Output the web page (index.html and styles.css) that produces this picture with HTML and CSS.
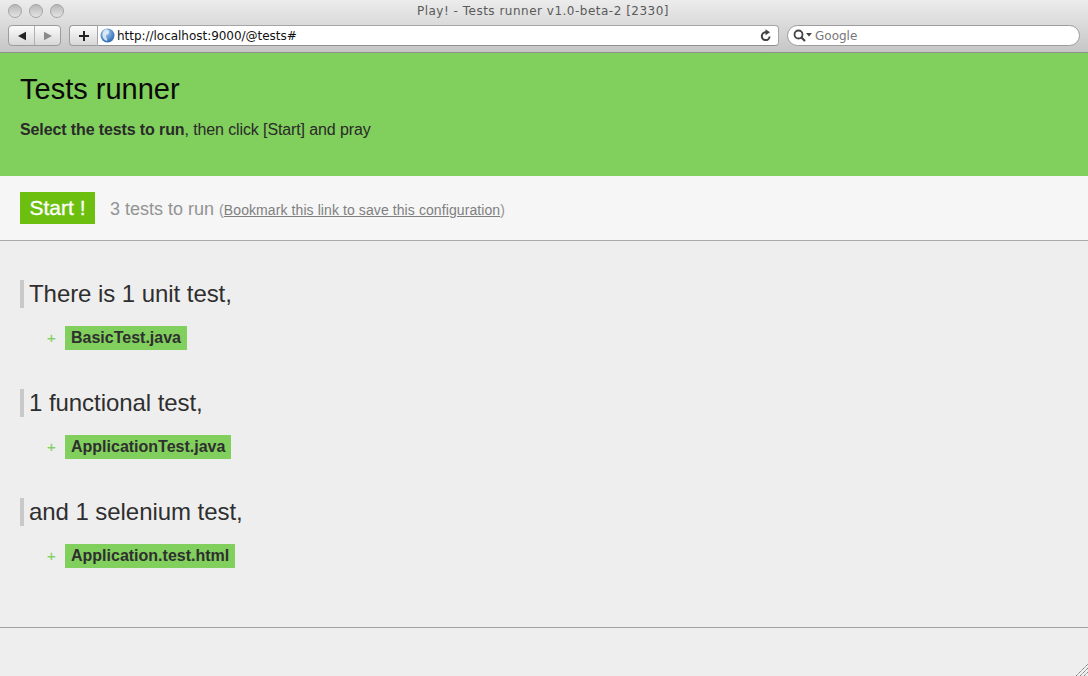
FILE: index.html
```html
<!DOCTYPE html>
<html lang="en">
<head>
<meta charset="utf-8">
<title>Play! - Tests runner v1.0-beta-2 [2330]</title>
<link rel="stylesheet" href="styles.css">
</head>
<body>
<div class="chrome">
  <div class="titlebar">
    <div class="lights"><span class="light"></span><span class="light"></span><span class="light"></span></div>
    <div class="wintitle">Play! - Tests runner v1.0-beta-2 [2330]</div>
  </div>
  <div class="toolbar">
    <div class="navbtns">
      <span class="navbtn"><svg width="10" height="10" viewBox="0 0 10 10"><path d="M1 5L9 .8V9.2Z" fill="#222"/></svg></span>
      <span class="navbtn"><svg width="10" height="10" viewBox="0 0 10 10"><path d="M9 5L1 .8V9.2Z" fill="#8a8a8a"/></svg></span>
    </div>
    <div class="address">
      <span class="addbtn"><svg width="12" height="12" viewBox="0 0 12 12"><path d="M6 1V11M1 6H11" stroke="#222" stroke-width="2"/></svg></span>
      <div class="urlfield">
        <svg class="globe" width="15" height="15" viewBox="0 0 15 15"><defs><radialGradient id="g" cx=".4" cy=".3" r=".8"><stop offset="0" stop-color="#a9cdf2"/><stop offset="1" stop-color="#1d5fae"/></radialGradient></defs><circle cx="7.5" cy="7.5" r="7" fill="url(#g)"/><path d="M5 1.5C8 1 10 3 9 5S6 6 6 8 8 10 7 13C4 12 2 9 2.5 6S4 3 5 1.5Z" fill="#e8eef5" opacity=".85"/></svg>
        <span class="url">http://localhost:9000/@tests#</span>
        <svg class="reload" width="12" height="13" viewBox="0 0 12 13"><path d="M9.6 7.5A3.9 3.9 0 1 1 6 3.3" fill="none" stroke="#444" stroke-width="2"/><path d="M5.5 .3L10 3.3 5.5 6.3Z" fill="#444"/></svg>
      </div>
    </div>
    <div class="search">
      <svg class="lens" width="19" height="13" viewBox="0 0 19 13"><circle cx="5.5" cy="5.5" r="4" fill="none" stroke="#444" stroke-width="1.8"/><path d="M8.5 8.5L12 12" stroke="#444" stroke-width="2.2"/><path d="M13 4H19L16 7.5Z" fill="#444"/></svg>
      <span class="placeholder">Google</span>
    </div>
  </div>
</div>

<header class="hero">
  <h1>Tests runner</h1>
  <p><strong>Select the tests to run</strong>, then click [Start] and pray</p>
</header>

<div class="startbar">
  <button class="start">Start !</button>
  <span class="count">3 tests to run</span>
  <span class="bookmark">(<a href="#">Bookmark this link to save this configuration</a>)</span>
</div>

<main class="tests">
  <section class="group">
    <h2>There is 1 unit test,</h2>
    <ul><li><span class="plus">+</span><span class="file">BasicTest.java</span></li></ul>
  </section>
  <section class="group">
    <h2>1 functional test,</h2>
    <ul><li><span class="plus">+</span><span class="file">ApplicationTest.java</span></li></ul>
  </section>
  <section class="group">
    <h2>and 1 selenium test,</h2>
    <ul><li><span class="plus">+</span><span class="file">Application.test.html</span></li></ul>
  </section>
</main>

<footer class="foot"></footer>
<svg class="grip" width="12" height="12" viewBox="0 0 12 12"><path d="M0 12L12 0M4 12L12 4M8 12L12 8" stroke="#777" stroke-width="1" stroke-dasharray="1.4 .6"/></svg>
</body>
</html>
```
FILE: styles.css
```css
* { box-sizing: border-box; }
html, body { margin: 0; height: 100%; }
body {
  height: 676px;
  overflow: hidden;
  position: relative;
  background: #eee;
  color: #2f2f2f;
  font-family: "Liberation Sans", Arial, sans-serif;
}

/* Browser chrome */
.chrome {
  height: 53px;
  background: linear-gradient(#ececec, #d9d9d9 50%, #c6c6c6);
  border-bottom: 1px solid #8f8f8f;
  font-family: "DejaVu Sans", sans-serif;
}
.titlebar {
  height: 25px;
  position: relative;
  display: flex;
  align-items: center;
  padding: 0 0 3px 8px;
}
.lights { display: flex; gap: 7px; }
.light {
  width: 14px;
  height: 14px;
  border-radius: 50%;
  background: linear-gradient(#b8b8b8, #e4e4e4);
  border: 1px solid #a4a4a4;
}
.wintitle {
  position: absolute;
  left: 0;
  right: 2px;
  top: 4px;
  text-align: center;
  font-size: 12px;
  line-height: 15px;
  letter-spacing: .5px;
  color: #5a5a5a;
}
.toolbar {
  display: flex;
  align-items: flex-start;
  padding-left: 8px;
}
.navbtns {
  width: 53px;
  height: 21px;
  display: flex;
  border: 1px solid #9c9c9c;
  border-radius: 4px;
  background: linear-gradient(#fbfbfb, #d8d8d8);
  margin-right: 8px;
}
.navbtn {
  flex: 1;
  display: flex;
  align-items: center;
  justify-content: center;
}
.navbtn + .navbtn { border-left: 1px solid #b0b0b0; }
.address {
  width: 710px;
  height: 21px;
  display: flex;
  margin-right: 8px;
}
.addbtn {
  width: 28px;
  display: flex;
  align-items: center;
  justify-content: center;
  border: 1px solid #9c9c9c;
  border-right: 0;
  border-radius: 4px 0 0 4px;
  background: linear-gradient(#fbfbfb, #d8d8d8);
}
.urlfield {
  flex: 1;
  display: flex;
  align-items: center;
  background: #fff;
  border: 1px solid #a5a5a5;
  border-bottom-color: #8f8f8f;
  border-radius: 0 4px 4px 0;
  padding: 0 6px 0 2px;
}
.globe { flex: none; margin-right: 2px; }
.url { flex: 1; font-size: 12px; letter-spacing: -.03px; color: #111; white-space: nowrap; }
.reload { flex: none; }
.search {
  width: 293px;
  height: 21px;
  display: flex;
  align-items: center;
  background: #fff;
  border: 1px solid #9c9c9c;
  border-radius: 11px;
  padding-left: 5px;
}
.lens { margin-right: 3px; flex: none; }
.placeholder { font-size: 12px; color: #777; }

/* Page */
.hero {
  height: 123px;
  background: #81cf5c;
  padding: 20px 20px 0;
  color: #111;
}
h1 {
  margin: 0;
  font-size: 29px;
  line-height: 33px;
  font-weight: 400;
  color: #0a0a0a;
}
.hero p {
  margin: 15px 0 0;
  font-size: 16px;
  line-height: 18px;
  letter-spacing: -.115px;
  color: #2a2a2a;
}
.startbar {
  height: 65px;
  background: #f6f6f6;
  border-bottom: 1px solid #a8a8a8;
  padding: 16px 20px 0;
  display: flex;
  align-items: flex-start;
}
.start {
  width: 75px;
  height: 32px;
  border: 0;
  padding: 0;
  margin-right: 15px;
  background: #6cbf0e;
  color: #fff;
  font: 400 21px/30px "Liberation Sans", Arial, sans-serif;
  -webkit-text-stroke: .3px #fff;
}
.count {
  margin-right: 5px;
  margin-top: 7px;
  font-size: 18px;
  line-height: 21px;
  color: #939393;
}
.bookmark {
  margin-top: 9px;
  font-size: 14px;
  line-height: 19px;
  letter-spacing: .09px;
  color: #939393;
}
.bookmark a { color: #7f7f7f; text-decoration: underline; }

.tests { padding: 39px 20px 0; height: 387px; border-bottom: 1px solid #a0a0a0; }
.group { height: 109px; }
h2 {
  margin: 0;
  height: 28px;
  border-left: 4px solid #c9c9c9;
  padding-left: 5px;
  font-size: 24px;
  line-height: 28px;
  font-weight: 400;
  letter-spacing: -.06px;
  color: #2e2e2e;
}
ul { list-style: none; margin: 18px 0 0; padding: 0 0 0 27px; }
li { display: flex; align-items: center; height: 24px; }
.plus {
  width: 18px;
  padding-bottom: 2px;
  font-size: 15px;
  color: #82d05e;
  font-weight: 400;
  -webkit-text-stroke: .2px #82d05e;
}
.file {
  height: 24px;
  background: #81cf5c;
  padding: 0 6px;
  font-size: 16px;
  line-height: 23px;
  font-weight: 700;
  color: #2f2f2f;
}
.foot { height: 48px; }
.grip { position: absolute; right: 0; bottom: 0; }
```
